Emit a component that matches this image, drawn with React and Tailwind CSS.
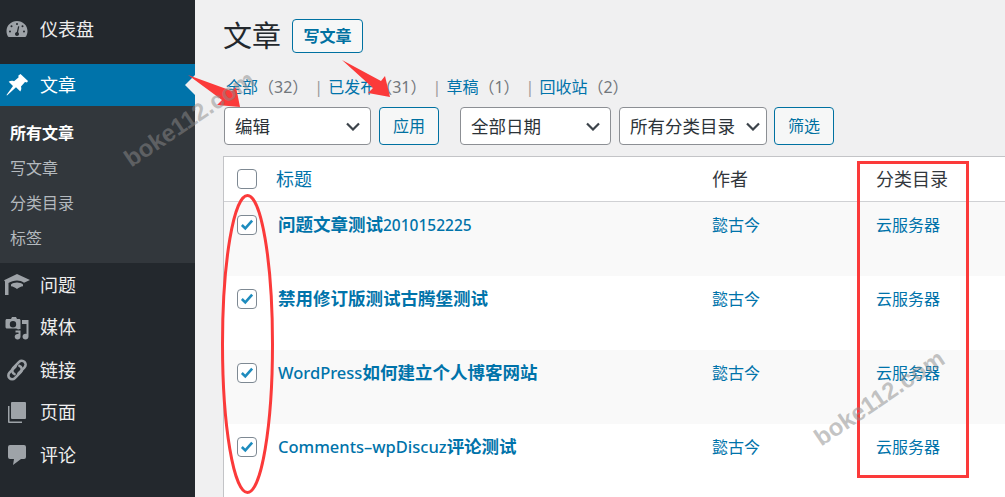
const font = '"Noto Sans", "Noto Sans CJK SC", sans-serif'

function DashIcon() {
  return (
    <svg width="22" height="18" viewBox="0 0 22 18" className="fill-[#9ea3a8]">
      <path fillRule="evenodd" d="M11 1C5.300 1 .5 5.400.5 11c0 2 .5 3.700 1.300 5.200.2.400.6.800 1.200.800h16c.6 0 1-.4 1.200-.8.800-1.500 1.300-3.200 1.300-5.200C21.500 5.400 16.700 1 11 1zM11 3a1 1 0 1 1 0 2 1 1 0 0 1 0-2zM5.500 5.200a1 1 0 1 1 0 2 1 1 0 0 1 0-2zM16.500 5.200a1 1 0 1 1 0 2 1 1 0 0 1 0-2zM4 10.500a1 1 0 1 1 0 2 1 1 0 0 1 0-2zM18 10.500a1 1 0 1 1 0 2 1 1 0 0 1 0-2zM13.300 6.500l-1.200 5.800c.5.400.9 1 .9 1.700 0 1.100-.9 2-2 2s-2-.9-2-2c0-1 .8-1.900 1.800-2l1.300-5.700z" />
    </svg>
  )
}

function PinIcon() {
  return (
    <svg width="24" height="24" viewBox="0 0 24 24" className="fill-white">
      <path d="M15.500 1l7.500 7-1 1.500-2-.5-4 4.500c.6 2 .3 3.500-.7 5l-4.300-4.300L2 22.500l-.5-.5 6.500-9-4.300-4.200c1.500-1 3.300-1.200 5.300-.6l4.500-3.700-.1-2z" />
    </svg>
  )
}

function CapIcon() {
  return (
    <svg width="26" height="22" viewBox="0 0 26 22" className="fill-[#9ea3a8]">
      <path d="M13 0l13 6-6 2.800C18 7.300 15.500 6.500 13 6.500c-3 0-6 1-8.500 2.500v12H1V7.500L0 6.200zM13 8.500c2.200 0 4.500.7 6 1.900v1.900c-2 .3-4.300 1.200-6 2.700-1.700-1.500-4-2.400-6-2.700v-1.900c1.500-1.200 3.800-1.900 6-1.900z" />
    </svg>
  )
}

function MediaIcon() {
  return (
    <svg width="24" height="24" viewBox="0 0 24 24" className="fill-[#9ea3a8]">
      <path fillRule="evenodd" d="M7 1h4l1 2h2c1 0 1.500.6 1.500 1.500V13c-.8-.2-1.800 0-2.500.5-.5-.6-1.300-1-2.200-1H2c-1 0-1.500-.6-1.500-1.500V4.500C.5 3.600 1 3 2 3h4zM8 5a3.200 3.200 0 1 0 0 6.400A3.200 3.200 0 0 0 8 5z" />
      <path d="M17 4h6.500v16.500c0 1.700-1.300 3-3 3s-3-1.200-3-2.800 1.400-2.900 3-2.900c.4 0 .7 0 1 .2V8H17zM10.500 14.500h5v6.200c0 1.500-1.300 2.800-2.900 2.800s-2.900-1.200-2.900-2.800 1.300-2.800 2.800-2.800c.4 0 .7 0 1 .1V16.500h-3z" />
    </svg>
  )
}

function LinkIcon() {
  return (
    <svg width="24" height="24" viewBox="0 0 24 24" fill="none" className="stroke-[#9ea3a8]" strokeWidth="2.600" strokeLinecap="round">
      <path d="M10.500 8.500l-6 6.200a3.800 3.800 0 0 0 5.400 5.400l6-6.200a3.800 3.800 0 0 0-1.500-6" />
      <path d="M13.500 15.500l6-6.200a3.800 3.800 0 0 0-5.400-5.400l-6 6.200a3.800 3.800 0 0 0 1.500 6" />
    </svg>
  )
}

function PagesIcon() {
  return (
    <svg width="20" height="22" viewBox="0 0 20 22" className="fill-[#9ea3a8]">
      <path d="M5 0h13a1 1 0 0 1 1 1v15a1 1 0 0 1-1 1H5a1 1 0 0 1-1-1V1a1 1 0 0 1 1-1z" />
      <path d="M2.500 4v15.500H15V21H2a1 1 0 0 1-1-1V4z" />
    </svg>
  )
}

function CommentIcon() {
  return (
    <svg width="20" height="22" viewBox="0 0 20 22" className="fill-[#9ea3a8]">
      <path d="M3 1h14a2 2 0 0 1 2 2v10a2 2 0 0 1-2 2h-3l-8 6 1-6H3a2 2 0 0 1-2-2V3a2 2 0 0 1 2-2z" />
    </svg>
  )
}

function MenuItem({ icon, label, className = '' }) {
  return (
    <div className={`flex items-center text-[#eeeeee] text-[18px] ${className}`}>
      <span className="w-[34px] mr-[6px] flex justify-center">{icon}</span>
      <span>{label}</span>
    </div>
  )
}

function Chevron() {
  return (
    <svg width="14" height="9" viewBox="0 0 14 9" fill="none" className="stroke-[#3c434a]" strokeWidth="2.200">
      <path d="M1 1.500l6 6 6-6" />
    </svg>
  )
}

function Select({ label, className = '' }) {
  return (
    <div className={`h-[38px] bg-white border border-[#8c8f94] rounded flex items-center justify-between pl-[10px] pr-[10px] text-[17.500px] text-[#2c3338] ${className}`}>
      <span className="pt-[1px]">{label}</span>
      <Chevron />
    </div>
  )
}

function OutlineButton({ label, className = '' }) {
  return (
    <div className={`h-[38px] bg-[#f6f7f7] border border-[#0071a1] rounded flex items-center justify-center text-[16px] text-[#0071a1] ${className}`}>
      {label}
    </div>
  )
}

function Checkbox({ checked }) {
  return (
    <div className="w-5 h-5 bg-white border border-[#7e8993] rounded flex items-center justify-center">
      {checked && (
        <svg width="14" height="12" viewBox="0 0 16 14" fill="none" className="stroke-[#1e8cbe]" strokeWidth="3">
          <path d="M2 7l4 4 8-9" />
        </svg>
      )}
    </div>
  )
}

const rows = [
  { title: <><span className="font-bold">问题文章测试</span><span className="font-medium text-[15.500px]">2010152225</span></> },
  { title: <span className="font-bold">禁用修订版测试古腾堡测试</span> },
  { title: <><span className="font-medium text-[16.500px]">WordPress</span><span className="font-bold">如何建立个人博客网站</span></> },
  { title: <><span className="font-medium text-[16.500px]">Comments–wpDiscuz</span><span className="font-bold">评论测试</span></> },
]

function Sidebar() {
  return (
    <aside className="w-[195px] shrink-0 bg-[#23282d] flex flex-col h-full">
      <MenuItem icon={<DashIcon />} label="仪表盘" className="h-[64px] pb-[6px]" />
      <div className="relative h-[42px] bg-[#0073aa] flex items-center text-white text-[18px]">
        <span className="w-[34px] mr-[6px] flex justify-center"><PinIcon /></span>
        <span>文章</span>
        <div className="absolute right-0 top-[11px] border-y-[10px] border-r-[10px] border-y-transparent border-r-[#f0f0f1]" />
      </div>
      <div className="h-[157px] bg-[#32373c] pt-[9px] pl-[10px] text-[16px] text-[#b4b9be]">
        <div className="h-[35px] flex items-center font-bold text-white">所有文章</div>
        <div className="h-[35px] flex items-center">写文章</div>
        <div className="h-[35px] flex items-center">分类目录</div>
        <div className="h-[35px] flex items-center">标签</div>
      </div>
      <div className="pt-[1px]">
        <MenuItem icon={<CapIcon />} label="问题" className="h-[42.500px]" />
        <MenuItem icon={<MediaIcon />} label="媒体" className="h-[42.500px]" />
        <MenuItem icon={<LinkIcon />} label="链接" className="h-[42.500px]" />
        <MenuItem icon={<PagesIcon />} label="页面" className="h-[42.500px]" />
        <MenuItem icon={<CommentIcon />} label="评论" className="h-[42.500px]" />
      </div>
    </aside>
  )
}

function PostsTable() {
  return (
    <div className="mt-[11px] bg-white border-l border-t border-[#c3c4c7]">
      <div className="h-[45px] flex items-center border-b border-[#d0d1d4]">
        <div className="w-[52px] pl-[13px] shrink-0"><Checkbox /></div>
        <div className="w-[436px] shrink-0 pt-[1px] text-[18px] text-[#0073aa]">标题</div>
        <div className="w-[164px] shrink-0 pt-[1px] text-[18px] text-[#32373c]">作者</div>
        <div className="pt-[1px] text-[18px] text-[#32373c]">分类目录</div>
      </div>
      {rows.map((row, i) => (
        <div key={i} className={`h-[74px] flex pt-[12px] ${i % 2 === 0 ? 'bg-[#f9f9f9]' : 'bg-white'}`}>
          <div className="w-[52px] pl-[13px] pt-[1px] shrink-0"><Checkbox checked /></div>
          <div className="w-[436px] pl-[2px] shrink-0 text-[17.500px] leading-[20px] text-[#0073aa]">{row.title}</div>
          <div className="w-[164px] shrink-0 text-[16px] leading-[22px] text-[#0073aa]">懿古今</div>
          <div className="text-[16px] leading-[22px] text-[#0073aa]">云服务器</div>
        </div>
      ))}
    </div>
  )
}

function Watermark({ className }) {
  return (
    <div className={`absolute font-['Liberation_Sans'] font-bold text-[24px] text-[#8a8a8a]/50 -rotate-[34deg] whitespace-nowrap ${className}`}>
      boke112.com
    </div>
  )
}

function Annotations() {
  return (
    <>
      <svg width="1005" height="497" className="absolute left-0 top-0 pointer-events-none">
        <polygon points="188,75 232,91 236,87 240,107 217,105 222,100" fill="#fb3a3a" />
        <polygon points="342,60 381,81 385,76 390,97 368,93 373,88" fill="#fb3a3a" />
        <ellipse cx="247.500" cy="344" rx="25" ry="148.500" fill="none" stroke="#fb3a3a" strokeWidth="3" />
      </svg>
      <div className="absolute left-[857px] top-[161px] w-[112px] h-[317px] border-[3px] border-[#fb3a3a]" />
      <Watermark className="left-[114px] top-[101px]" />
      <Watermark className="left-[804px] top-[380px]" />
    </>
  )
}

function StatusLink({ label, count, last }) {
  return (
    <>
      <span className="text-[#0073aa]">{label}</span>
      <span>（{count}）</span>
      {!last && <span className="ml-[6px] mr-[5px] text-[#9a9a9a]">|</span>}
    </>
  )
}

export default function App() {
  return (
    <div className="relative w-[1005px] h-[497px] overflow-hidden flex bg-[#f0f0f1]" style={{ fontFamily: font }}>
      <Sidebar />
      <main className="flex-1 min-w-0 pl-[28px]">
        <div className="flex items-center h-[34px] mt-[19px] gap-[11px]">
          <h1 className="text-[29px] text-[#23282d] font-normal">文章</h1>
          <OutlineButton label="写文章" className="w-[71px] !h-[34px] font-semibold" />
        </div>
        <div className="flex items-center mt-[22px] h-[24px] text-[16px] text-[#72777c] pl-[3px]">
          <StatusLink label="全部" count="32" />
          <StatusLink label="已发布" count="31" />
          <StatusLink label="草稿" count="1" />
          <StatusLink label="回收站" count="2" last />
        </div>
        <div className="flex items-center mt-[8px] ml-[1px]">
          <Select label="编辑" className="w-[147px]" />
          <OutlineButton label="应用" className="w-[60px] ml-[8px]" />
          <Select label="全部日期" className="w-[151px] ml-[21px]" />
          <Select label="所有分类目录" className="w-[148px] ml-[8px] !pr-[6px]" />
          <OutlineButton label="筛选" className="w-[60px] ml-[7px]" />
        </div>
        <PostsTable />
      </main>
      <Annotations />
    </div>
  )
}
